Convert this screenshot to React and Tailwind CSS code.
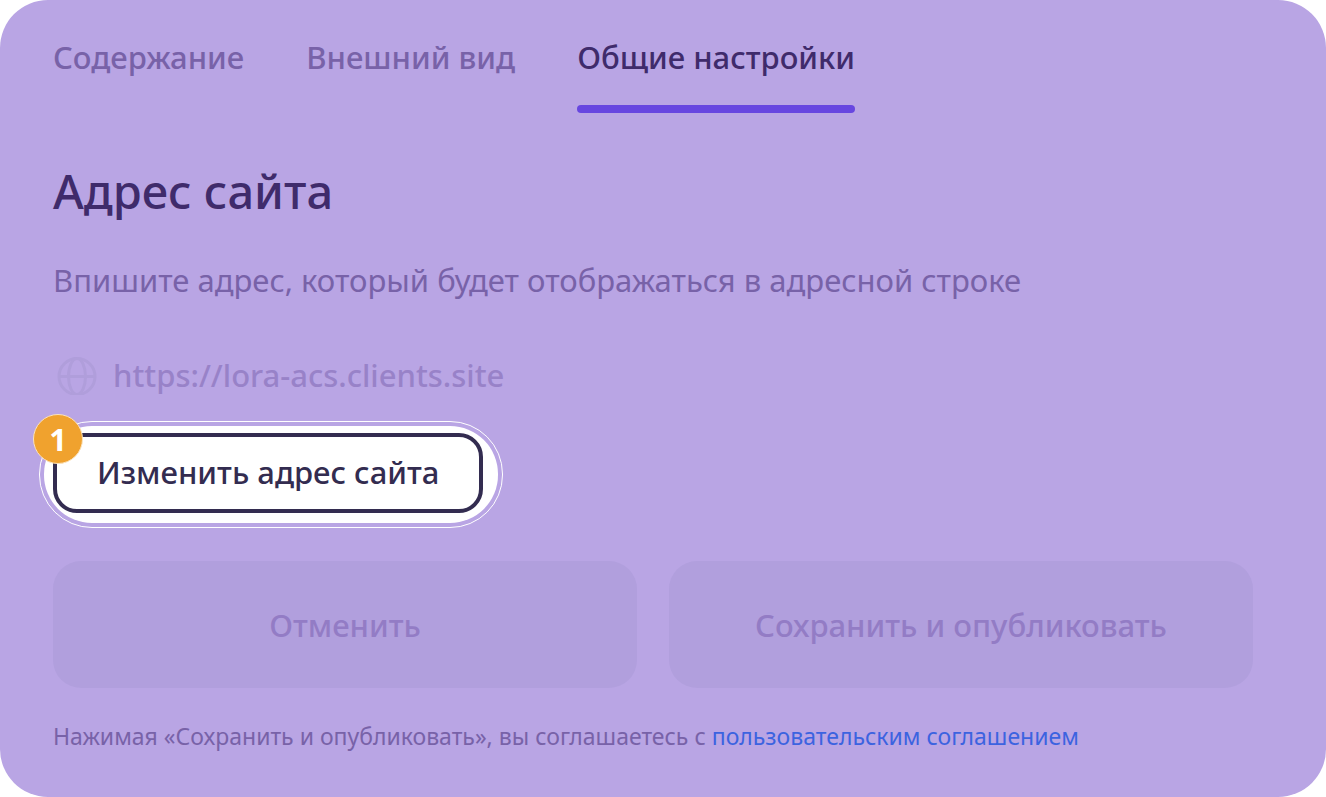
import { useState } from "react";

const tabs = ["Содержание", "Внешний вид", "Общие настройки"];

function GlobeIcon() {
  return (
    <svg className="w-12 h-10 shrink-0 text-[#b09edb]" viewBox="0 0 48 40" fill="none" stroke="currentColor" strokeWidth="3" aria-hidden="true">
      <circle cx="24" cy="21.5" r="18" />
      <ellipse cx="24" cy="21.5" rx="8.5" ry="18" />
      <path d="M6 21.5h36" />
    </svg>
  );
}

export default function App() {
  const [active, setActive] = useState("Общие настройки");

  return (
    <main className="min-h-screen bg-[#b9a5e4] rounded-[48px] pt-[37px] pb-[45px] pl-[53px] pr-[73px] font-['Noto_Sans',sans-serif] text-[#7862a8]">
      <nav className="flex gap-[62px] text-[31px] leading-10 font-medium">
        {tabs.map((tab) => (
          <button
            key={tab}
            type="button"
            onClick={() => setActive(tab)}
            className={tab === active ? "text-[#3f2b6b]" : ""}
          >
            {tab}
            <span className={`block mt-7 h-2 rounded-full ${tab === active ? "bg-[#6746e0]" : ""}`}></span>
          </button>
        ))}
      </nav>

      <h1 className="mt-[46px] text-[47px] leading-[64px] font-medium text-[#3f2b6b]">Адрес сайта</h1>
      <p className="mt-[37px] text-[31px] leading-10">
        Впишите адрес, который будет отображаться в адресной строке
      </p>

      <div className="mt-[55px] flex items-center gap-3 text-[31px] leading-10 font-medium text-[#9882c8]">
        <GlobeIcon />
        <span>https://lora-acs.clients.site</span>
      </div>

      {/* Highlighted step */}
      <div className="relative w-fit mt-[26px] -ml-[14px] p-1 border border-white rounded-[53px]">
        <div className="bg-white rounded-[48px] pt-[7px] pb-[10px] pl-[9px] pr-[15px]">
          <button
            type="button"
            className="block h-20 px-10 pb-0.5 border-4 border-[#332c50] rounded-3xl text-[31px] leading-10 font-medium text-[#332c50]"
          >
            Изменить адрес сайта
          </button>
        </div>
        <span className="absolute -left-[7px] -top-2 size-[50px] rounded-full border border-[#fbe3bd] bg-[#f0a22e] flex items-center justify-center text-[31px] leading-10 font-bold text-white">
          1
        </span>
      </div>

      <div className="mt-[33px] grid grid-cols-2 gap-8 text-[31px] leading-10 font-medium text-[#937cc5]">
        <button type="button" className="h-[127px] rounded-[28px] bg-[#b19fdd]">Отменить</button>
        <button type="button" className="h-[127px] rounded-[28px] bg-[#b19fdd]">Сохранить и опубликовать</button>
      </div>

      <p className="mt-8 text-[23px] leading-8">
        Нажимая «Сохранить и опубликовать», вы соглашаетесь с{" "}
        <a href="#agreement" className="text-[#3c63e0]">пользовательским соглашением</a>
      </p>
    </main>
  );
}
